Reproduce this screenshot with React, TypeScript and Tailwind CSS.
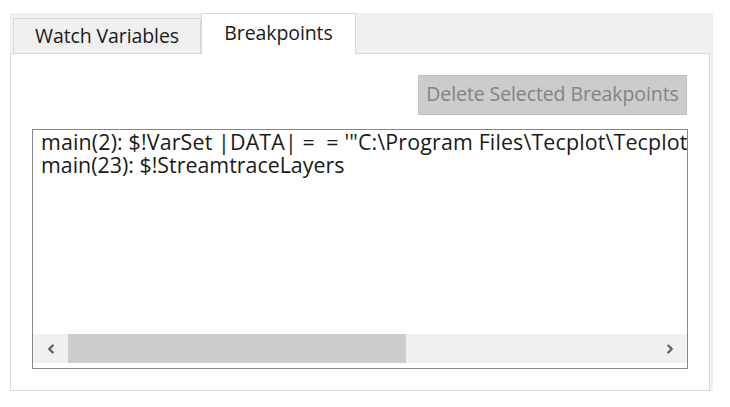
import { ChevronLeft, ChevronRight } from 'lucide-react';

const breakpoints = [
  'main(2): $!VarSet |DATA| =  = \'"C:\\Program Files\\Tecplot\\Tecplot',
  'main(23): $!StreamtraceLayers',
];

export default function App() {
  return (
    <div
      className="w-[730px] h-[407px] bg-white pt-[13px] pl-[10px]"
      style={{ fontFamily: '"Open Sans", "Noto Sans", sans-serif' }}
    >
      <div className="w-[703px] bg-[#f0f0f0]">
        {/* tab strip */}
        <div className="flex items-end h-[40px] pl-[3px]">
          <div className="h-[35px] w-[188px] border border-b-0 border-[#d9d9d9] bg-[#f0f0f0] flex items-center justify-center text-[19.5px] text-[#1a1a1a] tracking-[-0.1px]">
            Watch Variables
          </div>
          <div className="relative -mb-px h-[41px] w-[155px] border border-b-0 border-[#d9d9d9] bg-white flex items-center justify-center pb-[3px] text-[19.5px] text-[#1a1a1a] tracking-[-0.1px] z-10">
            Breakpoints
          </div>
        </div>

        {/* panel */}
        <div className="w-[700px] h-[338px] border border-[#d9d9d9] bg-white pt-[21px] pl-[21px] pr-[21px]">
          <div className="flex justify-end pr-[1px]">
            <button
              disabled
              className="h-[40px] w-[269px] border border-[#bfbfbf] bg-[#cccccc] text-[19.5px] text-[#838383] tracking-[-0.1px] pb-[2px]"
            >
              Delete Selected Breakpoints
            </button>
          </div>

          <div className="mt-[14px] w-[656px] h-[240px] border border-[#828790] bg-white flex flex-col">
            <div className="flex-1 overflow-hidden pl-[8px] text-[21.4px] leading-[23px] text-[#1a1a1a]">
              {breakpoints.map((b, i) => (
                <div key={b} className={i === 0 ? 'whitespace-pre tracking-[0.15px]' : 'whitespace-pre'}>
                  {b}
                </div>
              ))}
            </div>
            <div className="h-[29px] mb-[5px] flex bg-[#f0f0f0]">
              <div className="w-[35px] flex items-center justify-center text-[#606060]">
                <ChevronLeft size={14} strokeWidth={4} />
              </div>
              <div className="w-[338px] bg-[#cdcdcd]" />
              <div className="flex-1" />
              <div className="w-[35px] flex items-center justify-center text-[#606060]">
                <ChevronRight size={14} strokeWidth={4} />
              </div>
            </div>
          </div>
        </div>
      </div>
    </div>
  );
}
